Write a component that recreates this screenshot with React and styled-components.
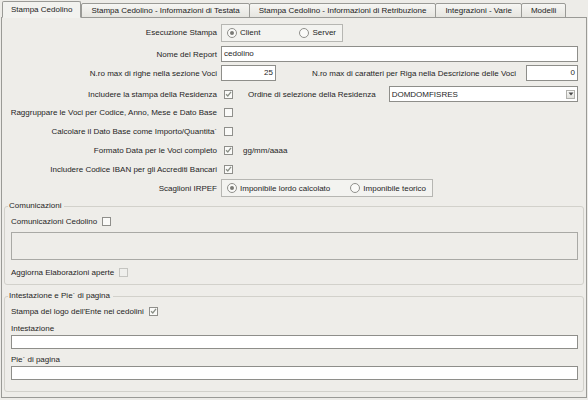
import React from 'react'
import styled, { createGlobalStyle } from 'styled-components'

const GlobalStyle = createGlobalStyle`
    body {
        margin: 0;
        background: #edece8;
        font-family: "Liberation Sans", Arial, sans-serif;
        font-size: 8px;
        color: #1e1e1e;
    }
`

const tabs = [
    'Stampa Cedolino',
    'Stampa Cedolino - Informazioni di Testata',
    'Stampa Cedolino - Informazioni di Retribuzione',
    'Integrazioni - Varie',
    'Modelli',
]

const Check = ({ checked, disabled }) => (
    <CheckBox disabled={disabled}>
        {checked && (
            <svg width="8" height="8" viewBox="0 0 8 8">
                <path d="M1.2 4.2 L3.2 6.2 L6.9 1.6" fill="none" stroke="#8a8f86" strokeWidth="1.5" />
            </svg>
        )}
    </CheckBox>
)

const Radio = ({ checked, children }) => (
    <RadioItem>
        <RadioDot>{checked && <Dot />}</RadioDot>
        {children}
    </RadioItem>
)

const App = () => {
    return (
        <Window>
            <GlobalStyle />
            <TabBar>
                {tabs.map((t, i) => (
                    <Tab key={t} active={i === 0}>{t}</Tab>
                ))}
            </TabBar>
            <Panel>
                <Form>
                    <Row h={19}>
                        <Label>Esecuzione Stampa</Label>
                        <Cell>
                            <RadioGroup w={122}>
                                <Radio checked>Client</Radio>
                                <Radio>Server</Radio>
                            </RadioGroup>
                        </Cell>
                    </Row>
                    <Row h={16} top={1}>
                        <Label>Nome del Report</Label>
                        <Cell>
                            <Field grow>cedolino</Field>
                        </Cell>
                    </Row>
                    <Row h={16}>
                        <Label>N.ro max di righe nella sezione Voci</Label>
                        <Cell>
                            <Field w={55} right>25</Field>
                            <InlineLabel grow>N.ro max di caratteri per Riga nella Descrizione delle Voci</InlineLabel>
                            <Field w={52} right>0</Field>
                        </Cell>
                    </Row>
                    <Row h={16} top={2}>
                        <Label>Includere la stampa della Residenza</Label>
                        <Cell>
                            <Check checked />
                            <InlineLabel pad={15}>Ordine di selezione della Residenza</InlineLabel>
                            <Combo>
                                <span>DOMDOMFISRES</span>
                                <ComboButton>
                                    <svg width="6" height="4" viewBox="0 0 6 4">
                                        <path d="M0.5 0.5 L5.5 0.5 L3 3.5 Z" fill="#4a4a4a" />
                                    </svg>
                                </ComboButton>
                            </Combo>
                        </Cell>
                    </Row>
                    <Row h={16} top={-1}>
                        <Label>Raggruppare le Voci per Codice, Anno, Mese e Dato Base</Label>
                        <Cell><Check /></Cell>
                    </Row>
                    <Row h={16}>
                        <Label>Calcolare il Dato Base come Importo/Quantita`</Label>
                        <Cell><Check /></Cell>
                    </Row>
                    <Row h={16}>
                        <Label>Formato Data per le Voci completo</Label>
                        <Cell>
                            <Check checked />
                            <InlineLabel pad={10}>gg/mm/aaaa</InlineLabel>
                        </Cell>
                    </Row>
                    <Row h={16}>
                        <Label>Includere Codice IBAN per gli Accrediti Bancari</Label>
                        <Cell><Check checked /></Cell>
                    </Row>
                    <Row h={18} top={-1}>
                        <Label>Scaglioni IRPEF</Label>
                        <Cell>
                            <RadioGroup w={212}>
                                <Radio checked>Imponibile lordo calcolato</Radio>
                                <Radio>Imponibile teorico</Radio>
                            </RadioGroup>
                        </Cell>
                    </Row>
                </Form>

                <Group h={79}>
                    <Legend>Comunicazioni</Legend>
                    <Line>
                        Comunicazioni Cedolino
                        <Check />
                    </Line>
                    <TextArea />
                    <Line>
                        Aggiorna Elaborazioni aperte
                        <Check disabled />
                    </Line>
                </Group>

                <Group h={96} second>
                    <Legend>Intestazione e Pie` di pagina</Legend>
                    <Line>
                        Stampa del logo dell'Ente nei cedolini
                        <Check checked />
                    </Line>
                    <Caption>Intestazione</Caption>
                    <WideField />
                    <Caption>Pie` di pagina</Caption>
                    <WideField />
                </Group>
            </Panel>
        </Window>
    )
}

export default App

const Window = styled.div`
    width: 588px;
    height: 400px;
    box-sizing: border-box;
    padding: 1px 1px 2px 1px;
    display: flex;
    flex-direction: column;
    overflow: hidden;
`

const TabBar = styled.div`
    display: flex;
    align-items: flex-end;
    height: 17px;
    padding-left: 1px;
    position: relative;
    z-index: 1;
`

const Tab = styled.div`
    box-sizing: border-box;
    height: ${p => (p.active ? 17 : 15)}px;
    line-height: ${p => (p.active ? 16 : 14)}px;
    padding: 0 ${p => (p.active ? 8 : 9)}px;
    border: 1px solid #9a9a96;
    border-bottom: ${p => (p.active ? '1px solid #f2f2ef' : '1px solid #9a9a96')};
    margin-right: ${p => (p.active ? 0 : -1)}px;
    margin-bottom: -1px;
    background: ${p => (p.active ? '#f2f2ef' : 'linear-gradient(#f6f6f3, #e6e5e0)')};
    border-radius: 2px 2px 0 0;
    white-space: nowrap;
    color: #222;
`

const Panel = styled.div`
    flex: 1;
    box-sizing: border-box;
    border: 1px solid #9a9a96;
    background: #eeede9;
    padding: 5px 1px 5px 1px;
    display: flex;
    flex-direction: column;
`

const Form = styled.div`
    display: flex;
    flex-direction: column;
    gap: 3px;
    padding-right: 7px;
`

const Row = styled.div`
    display: grid;
    grid-template-columns: 214px 1fr;
    column-gap: 4px;
    align-items: center;
    height: ${p => p.h}px;
    margin-top: ${p => p.top || 0}px;
`

const Label = styled.div`
    text-align: right;
    white-space: nowrap;
`

const Cell = styled.div`
    display: flex;
    align-items: center;
    min-width: 0;
`

const InlineLabel = styled.div`
    white-space: nowrap;
    padding-left: ${p => p.pad || 0}px;
    padding-right: 10px;
    ${p => p.grow && 'flex: 1; text-align: right;'}
`

const Field = styled.div`
    box-sizing: border-box;
    height: 16px;
    line-height: 14px;
    border: 1px solid #8e8e8a;
    background: #fff;
    padding: 0 2px;
    white-space: nowrap;
    ${p => (p.grow ? 'flex: 1;' : `width: ${p.w}px;`)}
    text-align: ${p => (p.right ? 'right' : 'left')};
`

const Combo = styled.div`
    flex: 1;
    box-sizing: border-box;
    height: 16px;
    margin-left: 3px;
    border: 1px solid #8e8e8a;
    background: #fff;
    display: flex;
    align-items: center;
    justify-content: space-between;
    padding: 0 2px 0 2px;
`

const ComboButton = styled.div`
    width: 9px;
    height: 9px;
    box-sizing: border-box;
    border: 1px solid #b0b0ac;
    background: linear-gradient(#fafaf8, #e0e0dc);
    display: flex;
    align-items: center;
    justify-content: center;
`

const CheckBox = styled.div`
    box-sizing: border-box;
    width: 9px;
    height: 9px;
    margin-left: 3px;
    border: 1px solid ${p => (p.disabled ? '#c4c4c0' : '#8f8f8b')};
    background: ${p => (p.disabled ? '#efefec' : '#fafaf8')};
    display: flex;
    align-items: center;
    justify-content: center;
    flex-shrink: 0;
`

const RadioGroup = styled.div`
    box-sizing: border-box;
    width: ${p => p.w}px;
    height: 18px;
    border: 1px solid #b6b6b2;
    background: #f3f3f0;
    display: flex;
    align-items: center;
    justify-content: space-between;
    padding: 0 6px 0 5px;
`

const RadioItem = styled.div`
    display: flex;
    align-items: center;
    gap: 3px;
    white-space: nowrap;
`

const RadioDot = styled.div`
    box-sizing: border-box;
    width: 10px;
    height: 10px;
    border-radius: 50%;
    border: 1px solid #8f8f8b;
    background: #fafaf8;
    display: flex;
    align-items: center;
    justify-content: center;
`

const Dot = styled.div`
    width: 4px;
    height: 4px;
    border-radius: 50%;
    background: #7a7a76;
`

const Group = styled.div`
    position: relative;
    box-sizing: border-box;
    height: ${p => p.h}px;
    margin: ${p => (p.second ? 11 : 9)}px 1px 0 1px;
    border: 1px solid #d2d1cb;
    border-radius: 3px;
    padding: 7px 5px 0 6px;
    display: flex;
    flex-direction: column;
`

const Legend = styled.div`
    position: absolute;
    top: -6px;
    left: 3px;
    padding: 0 3px 0 1px;
    background: #eeede9;
    line-height: 10px;
`

const Line = styled.div`
    display: flex;
    align-items: center;
    height: 14px;
    & > div {
        margin-left: 5px;
    }
`

const TextArea = styled.div`
    height: 28px;
    box-sizing: border-box;
    margin: 4px 0 5px 0;
    border: 1px solid #a9a9a5;
    background: #eeede9;
`

const Caption = styled.div`
    height: 13px;
    line-height: 13px;
    margin-top: 4px;
`

const WideField = styled.div`
    height: 14px;
    box-sizing: border-box;
    border: 1px solid #8e8e8a;
    background: #fff;
`
